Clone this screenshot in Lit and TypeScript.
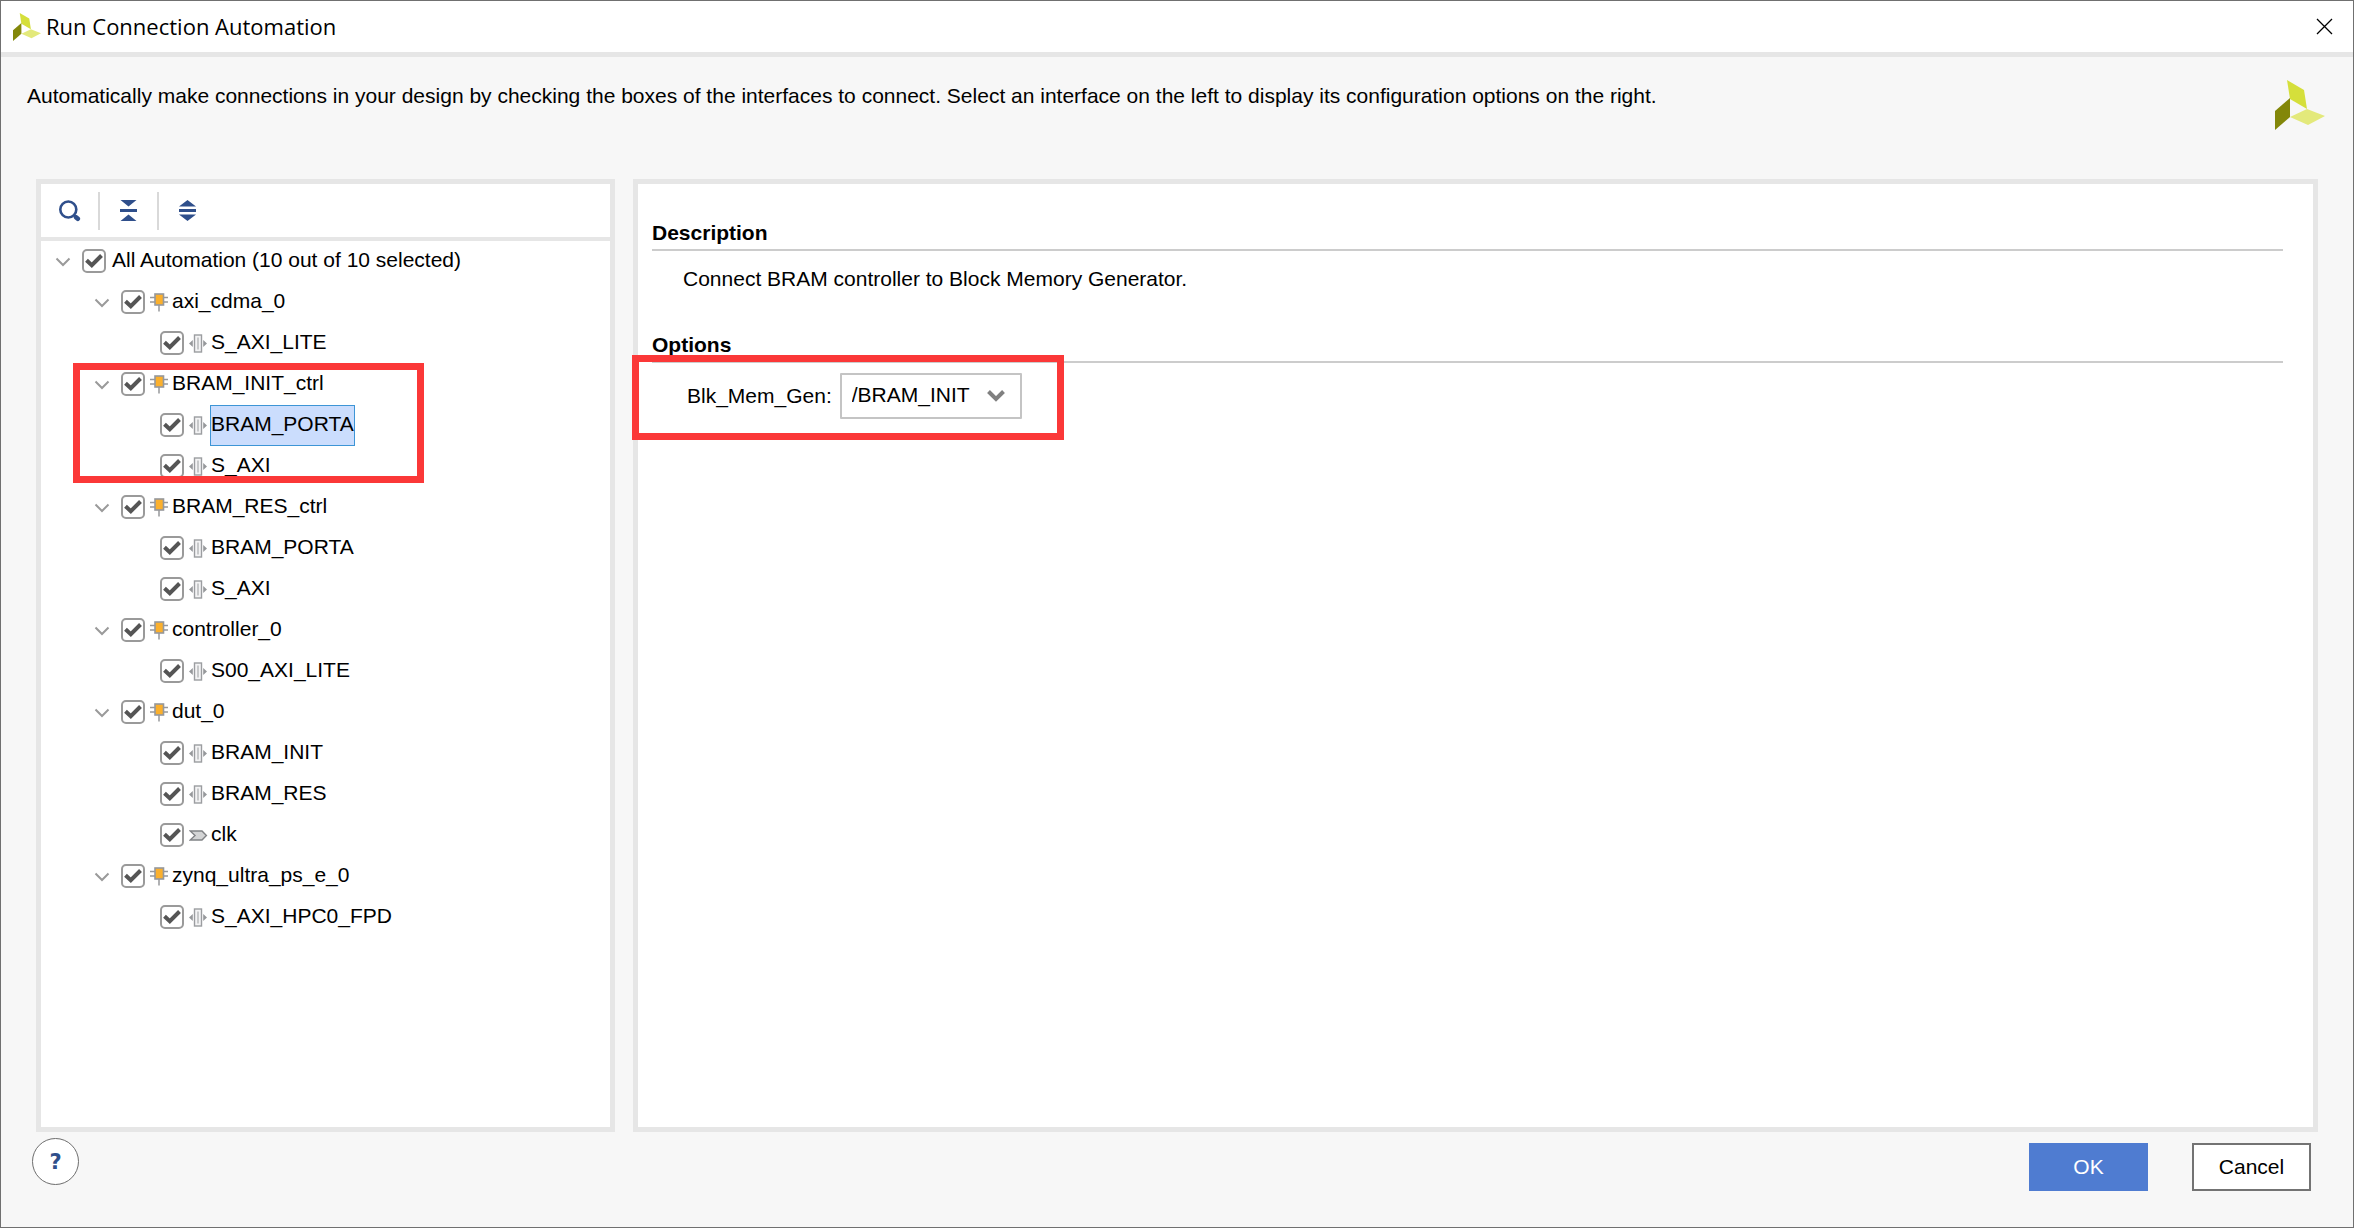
import { LitElement, html, svg, css, nothing } from "lit";
import { customElement, state } from "lit/decorators.js";
import { classMap } from "lit/directives/class-map.js";

type Kind = "root" | "block" | "bus" | "pin";

interface TreeRow {
  id: string;
  label: string;
  level: number;
  kind: Kind;
}

const ROWS: TreeRow[] = [
  { id: "all", label: "All Automation (10 out of 10 selected)", level: 0, kind: "root" },
  { id: "cdma", label: "axi_cdma_0", level: 1, kind: "block" },
  { id: "cdma-lite", label: "S_AXI_LITE", level: 2, kind: "bus" },
  { id: "init", label: "BRAM_INIT_ctrl", level: 1, kind: "block" },
  { id: "init-porta", label: "BRAM_PORTA", level: 2, kind: "bus" },
  { id: "init-axi", label: "S_AXI", level: 2, kind: "bus" },
  { id: "res", label: "BRAM_RES_ctrl", level: 1, kind: "block" },
  { id: "res-porta", label: "BRAM_PORTA", level: 2, kind: "bus" },
  { id: "res-axi", label: "S_AXI", level: 2, kind: "bus" },
  { id: "ctl", label: "controller_0", level: 1, kind: "block" },
  { id: "ctl-lite", label: "S00_AXI_LITE", level: 2, kind: "bus" },
  { id: "dut", label: "dut_0", level: 1, kind: "block" },
  { id: "dut-init", label: "BRAM_INIT", level: 2, kind: "bus" },
  { id: "dut-res", label: "BRAM_RES", level: 2, kind: "bus" },
  { id: "dut-clk", label: "clk", level: 2, kind: "pin" },
  { id: "zynq", label: "zynq_ultra_ps_e_0", level: 1, kind: "block" },
  { id: "zynq-hpc0", label: "S_AXI_HPC0_FPD", level: 2, kind: "bus" },
];

const logoShapes = svg`
  <polygon points="12,0 29,10 32,29 15,19" fill="#d5df3b"></polygon>
  <polygon points="15,18 15,37 0,50 0,31" fill="#838709"></polygon>
  <polygon points="15,37 32,29 50,36 33,45" fill="#e3e97b"></polygon>`;

const icons: Record<Kind, unknown> = {
  root: nothing,
  block: html`<svg class="kind" viewBox="0 0 19 19" width="19" height="19" aria-hidden="true">
    <path d="M0 4.5H18M0 9H18M9 12V18.5" stroke="#96989b" stroke-width="1.5" fill="none"></path>
    <rect x="5" y="1" width="8.5" height="11" fill="#fbb02d" stroke="#96989b" stroke-width="1.6"></rect>
  </svg>`,
  bus: html`<svg class="kind" viewBox="0 0 19 19" width="19" height="19" aria-hidden="true">
    <rect x="5.5" y="1" width="7" height="17" fill="#f4f4f5" stroke="#9b9da0" stroke-width="1.4"></rect>
    <path d="M9 3.5V15.5" stroke="#b4b6b8" stroke-width="1.4"></path>
    <path d="M3.8 6V13L0 9.5ZM14.2 6V13L18 9.5Z" fill="#96989b"></path>
  </svg>`,
  pin: html`<svg class="kind" viewBox="0 0 19 19" width="19" height="19" aria-hidden="true">
    <path d="M1.2 5H13L17.4 9.5L13 14H1.2L6 9.5Z" fill="#d3d4d5" stroke="#808285" stroke-width="1.4"></path>
  </svg>`,
};

@customElement("app-root")
export class AppRoot extends LitElement {
  @state() private selected = "init-porta";
  @state() private unchecked = new Set<string>();

  static styles = css`
    :host {
      display: block;
      font-family: "Liberation Sans", Arial, sans-serif;
      font-size: 21px;
      line-height: 24px;
      color: #000;
    }
    * {
      box-sizing: border-box;
    }
    svg {
      display: block;
      flex: none;
    }
    button {
      font: inherit;
      color: inherit;
      padding: 0;
      border: 0;
      background: none;
    }
    .dialog {
      min-height: 100vh;
      display: flex;
      flex-direction: column;
      border: 1px solid #707070;
      background: #f7f7f7;
    }
    .titlebar {
      display: flex;
      align-items: center;
      gap: 5px;
      height: 56px;
      padding: 0 20px 0 12px;
      background: #fff;
      border-bottom: 5px solid #e6e6e6;
    }
    .title {
      flex: 1;
      margin: 0;
      padding-bottom: 2px;
      font: 400 22px/30px "Open Sans", "Noto Sans", sans-serif;
    }
    .intro {
      display: flex;
      justify-content: space-between;
      align-items: flex-start;
      height: 122px;
      padding: 23px 28px 0 26px;
    }
    .intro p {
      margin: 4px 0 0;
    }
    .panels {
      flex: 1;
      display: grid;
      grid-template-columns: minmax(0, 579fr) minmax(0, 1685fr);
      gap: 18px;
      padding: 0 35px;
    }
    .panel {
      position: relative;
      background: #fff;
      border: 5px solid #e6e6e6;
    }
    .toolbar {
      display: flex;
      align-items: center;
      height: 57px;
      border-bottom: 4px solid #e6e6e6;
    }
    .tool {
      display: grid;
      place-items: center;
      width: 57px;
      height: 38px;
    }
    .divider {
      width: 2px;
      height: 38px;
      background: #d9d9d9;
    }
    .tree {
      list-style: none;
      margin: 0;
      padding: 0;
    }
    .row {
      display: flex;
      align-items: center;
      height: 41px;
      padding-left: 10px;
    }
    .row.level-1 {
      padding-left: 49px;
    }
    .row.level-2 {
      padding-left: 119px;
    }
    .twisty {
      display: grid;
      place-items: center;
      width: 24px;
      height: 25px;
      margin-right: 7px;
    }
    .check {
      display: grid;
      width: 24px;
      height: 25px;
      margin-right: 5px;
    }
    .check input,
    .check svg {
      grid-area: 1 / 1;
      width: 24px;
      height: 24px;
      margin: 0;
    }
    .check input {
      appearance: none;
      border: 2px solid #9a9a9a;
      border-radius: 5px;
      background: #fff;
    }
    .check svg {
      pointer-events: none;
      visibility: hidden;
    }
    .check input:checked + svg {
      visibility: visible;
    }
    .kind {
      margin-right: 2px;
    }
    .label {
      border: 1px solid transparent;
      padding-bottom: 4px;
      line-height: 35px;
      white-space: nowrap;
    }
    .label.selected {
      background: #cbddfd;
      border-color: #3d95d6;
    }
    .mark {
      position: absolute;
      border: 7px solid #fb3838;
      pointer-events: none;
    }
    .mark-tree {
      left: 32px;
      top: 179px;
      width: 351px;
      height: 120px;
    }
    .mark-option {
      left: -6px;
      top: 171px;
      width: 432px;
      height: 85px;
    }
    .details {
      padding: 36px 30px 0 14px;
    }
    .heading {
      margin: 0;
      padding: 1px 0 4px;
      font-size: 21px;
      line-height: 24px;
      font-weight: 700;
      border-bottom: 2px solid #cccccc;
    }
    .text {
      margin: 0;
      padding: 16px 31px 41px;
    }
    .option {
      display: flex;
      align-items: center;
      gap: 8px;
      padding: 10px 35px;
    }
    .combo {
      display: grid;
      align-items: center;
      width: 182px;
    }
    .combo select,
    .combo svg {
      grid-area: 1 / 1;
    }
    .combo select {
      appearance: none;
      width: 100%;
      height: 46px;
      padding: 0 36px 2px 10px;
      font: inherit;
      color: inherit;
      background: #fff;
      border: 2px solid #c4c4c4;
      border-radius: 1px;
    }
    .combo svg {
      justify-self: end;
      margin-right: 16px;
      pointer-events: none;
    }
    .footer {
      display: flex;
      align-items: flex-start;
      gap: 44px;
      height: 95px;
      padding: 6px 42px 0 31px;
    }
    .help {
      width: 47px;
      height: 47px;
      margin-right: auto;
      border: 1px solid #6e6e6e;
      border-radius: 50%;
      background: #fff;
      color: #2f4f8b;
      font: 700 21px/24px "DejaVu Sans", sans-serif;
    }
    .btn {
      width: 119px;
      height: 48px;
      margin-top: 5px;
    }
    .primary {
      background: #4f7cd1;
      color: #fff;
    }
    .secondary {
      background: #fff;
      border: 2px solid #737373;
    }
  `;

  private toggle(id: string, on: boolean) {
    const next = new Set(this.unchecked);
    on ? next.delete(id) : next.add(id);
    this.unchecked = next;
  }

  private renderRow(row: TreeRow) {
    const pick = () => (this.selected = row.id);
    return html`
      <li class="row level-${row.level}">
        ${row.level < 2
          ? html`<button class="twisty" aria-label="Collapse ${row.label}">
              <svg width="16" height="10" viewBox="0 0 16 10" aria-hidden="true">
                <path d="M1.5 1.5L8 8L14.5 1.5" fill="none" stroke="#9a9a9a" stroke-width="2"></path>
              </svg>
            </button>`
          : nothing}
        <span class="check">
          <input
            type="checkbox"
            id=${row.id}
            .checked=${!this.unchecked.has(row.id)}
            @change=${(e: Event) => this.toggle(row.id, (e.target as HTMLInputElement).checked)}
          />
          <svg viewBox="0 0 24 24" aria-hidden="true">
            <path d="M4.5 11.2L9.8 16.2L19.5 6.5" fill="none" stroke="#555" stroke-width="4"></path>
          </svg>
        </span>
        ${icons[row.kind]}
        <label
          for=${row.id}
          class=${classMap({ label: true, selected: this.selected === row.id })}
          @click=${pick}
          >${row.label}</label
        >
      </li>
    `;
  }

  render() {
    return html`
      <div class="dialog">
        <header class="titlebar">
          <svg width="28" height="28" viewBox="0 0 50 50" aria-hidden="true">${logoShapes}</svg>
          <h1 class="title">Run Connection Automation</h1>
          <button class="close" aria-label="Close">
            <svg width="17" height="17" viewBox="0 0 17 17" aria-hidden="true">
              <path d="M1 1L16 16M16 1L1 16" stroke="#000" stroke-width="1.3"></path>
            </svg>
          </button>
        </header>

        <section class="intro">
          <p>
            Automatically make connections in your design by checking the boxes of the interfaces to connect. Select an
            interface on the left to display its configuration options on the right.
          </p>
          <svg width="50" height="50" viewBox="0 0 50 50" aria-hidden="true">${logoShapes}</svg>
        </section>

        <main class="panels">
          <section class="panel">
            <div class="toolbar">
              <button class="tool" aria-label="Search">
                <svg width="22" height="22" viewBox="0 0 22 22" aria-hidden="true">
                  <circle cx="9.3" cy="9.5" r="8" fill="none" stroke="#2f4f8b" stroke-width="2.6"></circle>
                  <path d="M17 17.2L18.8 18.8" stroke="#2f4f8b" stroke-width="4.6" stroke-linecap="round"></path>
                </svg>
              </button>
              <span class="divider"></span>
              <button class="tool" aria-label="Collapse all">
                <svg width="17" height="21" viewBox="0 0 17 21" aria-hidden="true">
                  <path d="M0.5 0H16.5L8.5 6.5ZM0 9H17V12H0ZM0.5 21H16.5L8.5 14.5Z" fill="#2f4f8b"></path>
                </svg>
              </button>
              <span class="divider"></span>
              <button class="tool" aria-label="Expand all">
                <svg width="17" height="21" viewBox="0 0 17 21" aria-hidden="true">
                  <path d="M0 6.5L8.5 0L17 6.5ZM0 9H17V12H0ZM0 14.5H17L8.5 21Z" fill="#2f4f8b"></path>
                </svg>
              </button>
            </div>
            <ul class="tree">
              ${ROWS.map((r) => this.renderRow(r))}
            </ul>
            <div class="mark mark-tree"></div>
          </section>

          <section class="panel">
            <div class="details">
              <h2 class="heading">Description</h2>
              <p class="text">Connect BRAM controller to Block Memory Generator.</p>
              <h2 class="heading">Options</h2>
              <div class="option">
                <label for="blk-mem-gen">Blk_Mem_Gen:</label>
                <span class="combo">
                  <select id="blk-mem-gen">
                    <option>/BRAM_INIT</option>
                  </select>
                  <svg width="20" height="14" viewBox="0 0 20 14" aria-hidden="true">
                    <path d="M2.5 2.5L10 10L17.5 2.5" fill="none" stroke="#808080" stroke-width="4"></path>
                  </svg>
                </span>
              </div>
            </div>
            <div class="mark mark-option"></div>
          </section>
        </main>

        <footer class="footer">
          <button class="help" aria-label="Help">?</button>
          <button class="btn primary">OK</button>
          <button class="btn secondary">Cancel</button>
        </footer>
      </div>
    `;
  }
}
